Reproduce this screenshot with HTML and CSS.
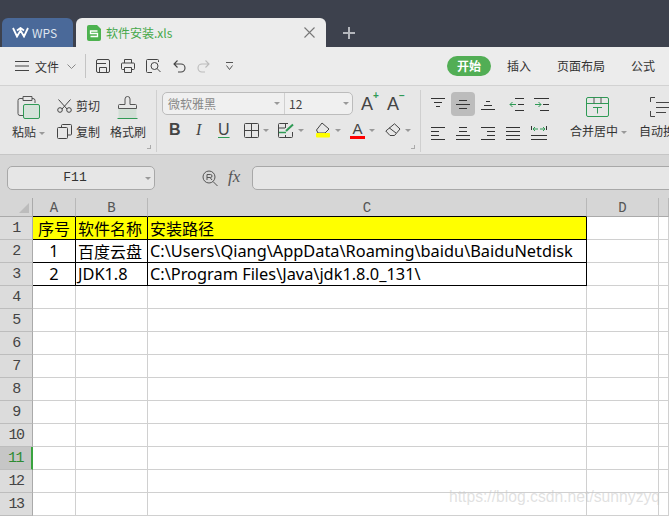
FILE: index.html
```html
<!DOCTYPE html>
<html lang="zh-CN">
<head>
    <meta charset="UTF-8">
    <meta name="viewport" content="width=device-width, initial-scale=1.0">
    <title>软件安装.xls</title>
    <link rel="stylesheet" href="styles.css">
</head>
<body>
    <div class="titlebar">
        <div class="tab-wps">
            <svg width="17" height="11" viewBox="0 0 17 11"><path d="M1 1 5 9.500 8.500 3.500 12 9.500 16 1M5 3.500 8.500 1 12 3.500" fill="none" stroke="#fff" stroke-width="1.800"/></svg>
            <span>WPS</span>
        </div>
        <div class="tab-file">
            <svg width="14" height="16" viewBox="0 0 14 16"><path d="M2 0H10L14 4V14A2 2 0 0 1 12 16H2A2 2 0 0 1 0 14V2A2 2 0 0 1 2 0Z" fill="#4db24f"/><path d="M10.500 6H3.500V8.500H10.500V11.500H3.500" fill="none" stroke="#fff" stroke-width="1.300"/></svg>
            <span class="tab-file-name">软件安装.xls</span>
            <svg class="tab-close" width="11" height="11" viewBox="0 0 11 11"><path d="M.5.5 10.500 10.500M10.500.5.5 10.500" stroke="#777" stroke-width="1.100"/></svg>
        </div>
        <svg class="tab-add" width="12" height="12" viewBox="0 0 12 12"><path d="M6 0V12M0 6H12" stroke="#b4b6bc" stroke-width="2"/></svg>
    </div>

    <div class="menubar">
        <svg class="menu-icon" width="14" height="10" viewBox="0 0 14 10"><path d="M0 .5H14M0 5H14M0 9.500H14" stroke="#444"/></svg>
        <span class="menu-file">文件</span>
        <svg class="menu-chevron" width="9" height="5" viewBox="0 0 9 5"><path d="M.5.5 4.500 4.500 8.500.5" fill="none" stroke="#888"/></svg>
        <div class="menu-divider"></div>
        <div class="quick">
            <svg width="14" height="14" viewBox="0 0 14 14"><path d="M2 .5H12A1.500 1.500 0 0 1 13.500 2V12A1.500 1.500 0 0 1 12 13.500H2A1.500 1.500 0 0 1 .5 12V2A1.500 1.500 0 0 1 2 .5ZM3.500 13.500V8.500H10.500V13.500M.5 4.500H10" fill="none" stroke="#444"/></svg>
            <svg width="14" height="14" viewBox="0 0 14 14"><path d="M3.500 4V.5H10.500V4M3.500 10.500H1.500A1 1 0 0 1 .5 9.500V5A1 1 0 0 1 1.500 4H12.500A1 1 0 0 1 13.500 5V9.500A1 1 0 0 1 12.500 10.500H10.500M3.500 8.500H10.500V13.500H3.500Z" fill="none" stroke="#444"/></svg>
            <svg width="15" height="14" viewBox="0 0 15 14"><path d="M12.500 3V1.500A1 1 0 0 0 11.500.5H1.500A1 1 0 0 0 .5 1.500V12.500A1 1 0 0 0 1.500 13.500H6" fill="none" stroke="#444"/><circle cx="8.500" cy="7" r="3.500" fill="none" stroke="#444"/><path d="M11 9.500 14.500 13" stroke="#444"/></svg>
        </div>
        <div class="history">
            <svg width="13" height="13" viewBox="0 0 13 13"><path d="M4.500 .5 1 4 4.500 7.500M1 4H8A4 4 0 0 1 8 12H5" fill="none" stroke="#444" stroke-width="1.100"/></svg>
            <svg width="13" height="13" viewBox="0 0 13 13"><path d="M8.500 .5 12 4 8.500 7.500M12 4H5A4 4 0 0 0 5 12H8" fill="none" stroke="#bbb" stroke-width="1.100"/></svg>
            <svg class="quick-more" width="7" height="9" viewBox="0 0 7 9"><path d="M0 .5H7M.5 3.500 3.500 7.500 6.500 3.500" fill="none" stroke="#555"/></svg>
        </div>
        <div class="menu-tabs">
            <span class="menu-tab menu-tab-active">开始</span>
            <span class="menu-tab">插入</span>
            <span class="menu-tab">页面布局</span>
            <span class="menu-tab">公式</span>
        </div>
    </div>

    <div class="ribbon">
        <div class="group group-clipboard">
            <div class="big-btn btn-paste">
                <svg width="23" height="23" viewBox="0 0 23 23"><path d="M6 2.500H3A2 2 0 0 0 1 4.500V17.500A2 2 0 0 0 3 19.500H6M15 2.500H16A2 2 0 0 1 18 4.500V7M6 .5H15V4.500H6Z" fill="none" stroke="#555"/><rect x="6.500" y="8.500" width="16" height="14" rx="1.500" fill="#d5e3da" stroke="#2f9a55"/></svg>
                <span class="big-label">粘贴<i class="caret"></i></span>
            </div>
            <div class="small-btns">
                <div class="small-btn">
                    <svg width="15" height="14" viewBox="0 0 15 14"><path d="M1.500 .5 10 10M13.500 .5 5 10" stroke="#444" fill="none"/><circle cx="3" cy="11" r="2.300" fill="none" stroke="#444"/><circle cx="12" cy="11" r="2.300" fill="none" stroke="#444"/></svg>
                    <span>剪切</span>
                </div>
                <div class="small-btn">
                    <svg width="15" height="15" viewBox="0 0 15 15"><path d="M4.500 3V1.500A1 1 0 0 1 5.500.5H13.500A1 1 0 0 1 14.500 1.500V10A1 1 0 0 1 13.500 11H11" fill="none" stroke="#444"/><rect x=".5" y="3.500" width="10" height="11" rx="1" fill="#e7e7e7" stroke="#444"/></svg>
                    <span>复制</span>
                </div>
            </div>
            <div class="big-btn btn-brush">
                <svg width="21" height="23" viewBox="0 0 21 23"><path d="M1.500 12H19.500V22H1.500Z" fill="#d2dfd6"/><path d="M1.500 12.500V9.500A1 1 0 0 1 2.500 8.500H8V3A2.500 2.500 0 0 1 13 3V8.500H18.500A1 1 0 0 1 19.500 9.500V12.500Z" fill="none" stroke="#555"/><path d="M.5 22.500H20.500" stroke="#2f9a55"/></svg>
                <span class="big-label">格式刷</span>
            </div>
            <i class="launcher"></i>
        </div>

        <div class="group group-font">
            <div class="font-row">
                <div class="font-box">
                    <div class="font-name">微软雅黑<i class="caret"></i></div>
                    <div class="font-size">12<i class="caret"></i></div>
                </div>
                <span class="grow-btn">A<b class="grow-plus">+</b></span>
                <span class="grow-btn">A<b class="grow-minus">−</b></span>
            </div>
            <div class="format-row">
                <span class="fmt fmt-bold">B</span>
                <span class="fmt fmt-italic">I</span>
                <span class="fmt fmt-under">U</span>
                <span class="fmt-drop">
                    <svg width="15" height="15" viewBox="0 0 15 15"><path d="M1.500.5H13.500A1 1 0 0 1 14.500 1.500V13.500A1 1 0 0 1 13.500 14.500H1.500A1 1 0 0 1 .5 13.500V1.500A1 1 0 0 1 1.500.5ZM7.500.5V14.500M.5 7.500H14.500" fill="none" stroke="#444"/></svg>
                    <i class="caret"></i>
                </span>
                <span class="fmt-drop fmt-drop-wide">
                    <svg width="16" height="15" viewBox="0 0 16 15"><path d="M10 .5H1.500A1 1 0 0 0 .5 1.500V13.500A1 1 0 0 0 1.500 14.500H13.500A1 1 0 0 0 14.500 13.500V9M7.500.5V5M.5 5H7M7.500 12V14.500" fill="none" stroke="#444"/><path d="M1 9.500H8" stroke="#2f9a55" stroke-width="1.500"/><path d="M8 8 15 1.500" stroke="#2f9a55" stroke-width="2"/></svg>
                    <i class="caret"></i>
                </span>
                <span class="fmt-drop">
                    <svg width="16" height="16" viewBox="0 0 16 16"><path d="M7 1 14 7 10 11H3L1.500 8Z" fill="none" stroke="#444"/><rect x="1" y="11" width="14" height="4.500" rx="1" fill="#ff0"/></svg>
                    <i class="caret"></i>
                </span>
                <span class="fmt-drop">
                    <span class="fmt-color">A</span>
                    <i class="caret"></i>
                </span>
                <span class="fmt-drop">
                    <svg width="16" height="14" viewBox="0 0 16 14"><path d="M9.500.8 15 6 9.500 12.500H5L.8 8Z M4 4.700 11 10" fill="none" stroke="#444"/></svg>
                    <i class="caret"></i>
                </span>
            </div>
            <i class="launcher"></i>
        </div>

        <div class="group-align">
            <div class="align-row">
                <span class="align-btn"><svg width="14" height="12" viewBox="0 0 14 12"><path d="M0 .5H14M3 4.500H11M5 8.500H9" stroke="#333"/></svg></span>
                <span class="align-btn align-on"><svg width="14" height="9" viewBox="0 0 14 9"><path d="M3 .5H11M0 4.500H14M3 8.500H11" stroke="#333"/></svg></span>
                <span class="align-btn"><svg width="14" height="12" viewBox="0 0 14 12"><path d="M5 3.500H9M3 7.500H11M0 11.500H14" stroke="#333"/></svg></span>
                <span class="align-btn align-indent"><svg width="15" height="13" viewBox="0 0 15 13"><path d="M6 .5H15M9 6.500H15M6 12.500H15" stroke="#333"/><path d="M7 6.500H1M3.500 4 1 6.500 3.500 9" fill="none" stroke="#2f9a55"/></svg></span>
                <span class="align-btn align-indent"><svg width="15" height="13" viewBox="0 0 15 13"><path d="M0 .5H15M9 6.500H15M6 12.500H15" stroke="#333"/><path d="M1 6.500H7M4.500 4 7 6.500 4.500 9" fill="none" stroke="#2f9a55"/></svg></span>
            </div>
            <div class="align-row">
                <span class="align-btn"><svg width="14" height="13" viewBox="0 0 14 13"><path d="M0 .5H14M0 4.500H8M0 8.500H8M0 12.500H14" stroke="#333"/></svg></span>
                <span class="align-btn"><svg width="14" height="13" viewBox="0 0 14 13"><path d="M0 12.500H14M3 .5H11M3 4.500H11M0 8.500H14" stroke="#333"/></svg></span>
                <span class="align-btn"><svg width="14" height="13" viewBox="0 0 14 13"><path d="M0 .5H14M6 4.500H14M6 8.500H14M0 12.500H14" stroke="#333"/></svg></span>
                <span class="align-btn"><svg width="14" height="13" viewBox="0 0 14 13"><path d="M0 .5H14M0 4.500H14M0 8.500H14M0 12.500H14" stroke="#333"/></svg></span>
                <span class="align-btn"><svg width="16" height="14" viewBox="0 0 16 14"><path d="M.5 0V4M15.500 0V4M0 9.500H16M0 13.500H16" stroke="#333"/><path d="M2 3H7M4 1 2 3 4 5M14 3H9M12 1 14 3 12 5" fill="none" stroke="#2f9a55"/></svg></span>
            </div>
        </div>

        <div class="big-btn btn-merge">
            <svg width="23" height="20" viewBox="0 0 23 20"><path d="M2 .5H21A1.500 1.500 0 0 1 22.500 2V18A1.500 1.500 0 0 1 21 19.500H2A1.500 1.500 0 0 1 .5 18V2A1.500 1.500 0 0 1 2 .5ZM.5 6.500H22.500" fill="none" stroke="#2f9a55"/><path d="M8 .5V6.500M15 .5V6.500" stroke="#555"/><path d="M7 10.500H16M11.500 10.500V16.500" stroke="#2f9a55"/></svg>
            <span class="big-label">合并居中<i class="caret"></i></span>
        </div>
        <div class="big-btn btn-wrap">
            <svg width="30" height="20" viewBox="0 0 30 20"><path d="M5 .5H.5V5M.5 14V19.500H5M6 5.500H30M6 10.500H30M6 15.500H16" fill="none" stroke="#444"/></svg>
            <span class="big-label">自动换行</span>
        </div>
    </div>

    <div class="formula">
        <div class="name-box">F11<i class="caret"></i></div>
        <svg class="formula-zoom" width="16" height="17" viewBox="0 0 16 17"><circle cx="7" cy="7" r="6" fill="none" stroke="#555"/><path d="M5 10V4.500H8.500A1.500 1.500 0 0 1 8.500 7.500H5M8 7.500 10 10M11 11.500 15.500 16" fill="none" stroke="#555"/></svg>
        <span class="formula-fx">fx</span>
        <div class="formula-input"></div>
    </div>

    <div class="sheet">
        <div class="corner"><i class="corner-mark"></i></div>
        <div class="col-head edge">A</div>
        <div class="col-head edge">B</div>
        <div class="col-head edge">C</div>
        <div class="col-head">D</div>
        <div class="col-head"></div>

        <div class="row-head">1</div>
        <div class="cell boxed fill cell-center">序号</div>
        <div class="cell boxed fill">软件名称</div>
        <div class="cell boxed fill">安装路径</div>
        <div class="cell"></div><div class="cell"></div>

        <div class="row-head">2</div>
        <div class="cell boxed cell-center latin">1</div>
        <div class="cell boxed">百度云盘</div>
        <div class="cell boxed latin">C:\Users\Qiang\AppData\Roaming\baidu\BaiduNetdisk</div>
        <div class="cell"></div><div class="cell"></div>

        <div class="row-head">3</div>
        <div class="cell boxed cell-center latin">2</div>
        <div class="cell boxed latin">JDK1.8</div>
        <div class="cell boxed latin">C:\Program Files\Java\jdk1.8.0_131\</div>
        <div class="cell"></div><div class="cell"></div>

        <div class="row-head">4</div><div class="cell"></div><div class="cell"></div><div class="cell"></div><div class="cell"></div><div class="cell"></div>
        <div class="row-head">5</div><div class="cell"></div><div class="cell"></div><div class="cell"></div><div class="cell"></div><div class="cell"></div>
        <div class="row-head">6</div><div class="cell"></div><div class="cell"></div><div class="cell"></div><div class="cell"></div><div class="cell"></div>
        <div class="row-head">7</div><div class="cell"></div><div class="cell"></div><div class="cell"></div><div class="cell"></div><div class="cell"></div>
        <div class="row-head">8</div><div class="cell"></div><div class="cell"></div><div class="cell"></div><div class="cell"></div><div class="cell"></div>
        <div class="row-head">9</div><div class="cell"></div><div class="cell"></div><div class="cell"></div><div class="cell"></div><div class="cell"></div>
        <div class="row-head">10</div><div class="cell"></div><div class="cell"></div><div class="cell"></div><div class="cell"></div><div class="cell"></div>
        <div class="row-head row-head-active">11</div><div class="cell"></div><div class="cell"></div><div class="cell"></div><div class="cell"></div><div class="cell"></div>
        <div class="row-head">12</div><div class="cell"></div><div class="cell"></div><div class="cell"></div><div class="cell"></div><div class="cell"></div>
        <div class="row-head">13</div><div class="cell"></div><div class="cell"></div><div class="cell"></div><div class="cell"></div><div class="cell"></div>
    </div>

    <div class="watermark">https://blog.csdn.net/sunnyzyq</div>
</body>
</html>
```

FILE: styles.css
```css
* {
    box-sizing: border-box;
}
html, body {
    height: 516px;
}
body {
    margin: 0;
    position: relative;
    overflow: hidden;
    background-color: #fff;
    color: #333;
    font-family: "Noto Sans CJK SC", "Noto Sans", sans-serif;
    font-size: 12px;
}
svg {
    display: block;
    flex: none;
}
i {
    font-style: normal;
}

/* caret de los desplegables */
.caret {
    display: inline-block;
    width: 0;
    height: 0;
    border-left: 3px solid transparent;
    border-right: 3px solid transparent;
    border-top: 3px solid #999;
}

/* barra de titulo */
.titlebar {
    height: 47px;
    background-color: #3d414d;
    display: flex;
    align-items: flex-end;
    padding-left: 2px;
}
.tab-wps {
    width: 71px;
    height: 29px;
    background-color: #4a6999;
    border-radius: 6px 6px 0 0;
    color: #dfe5ee;
    display: flex;
    align-items: center;
    gap: 3px;
    padding-left: 10px;
}
.tab-file {
    width: 250px;
    height: 29px;
    margin-left: 3px;
    background-color: #ececec;
    border-radius: 6px 6px 0 0;
    display: flex;
    align-items: center;
    padding: 0 11px;
}
.tab-file-name {
    margin-left: 5px;
    color: #45a84a;
}
.tab-close {
    margin-left: auto;
}
.tab-add {
    margin: 0 0 8px 17px;
}

/* menu */
.menubar {
    height: 39px;
    background-color: #ececec;
    border-bottom: 1px solid #d2d2d2;
    display: flex;
    align-items: center;
    padding-left: 15px;
}
.menu-file {
    margin-left: 6px;
    white-space: nowrap;
    flex: none;
}
.menu-chevron {
    margin-left: 8px;
}
.menu-divider {
    width: 1px;
    height: 24px;
    margin-left: 9px;
    background-color: #c4c4c4;
    flex: none;
}
.quick {
    display: flex;
    gap: 11px;
    margin-left: 10px;
    flex: none;
}
.history {
    display: flex;
    align-items: center;
    gap: 11px;
    margin-left: 12px;
    flex: none;
}
.quick-more {
    margin-left: 5px;
}
.menu-tabs {
    display: flex;
    align-items: center;
    margin-left: 214px;
    flex: none;
}
.menu-tab {
    padding: 0 13px;
    line-height: 20px;
    white-space: nowrap;
}
.menu-tab-active {
    padding: 0 10px;
    margin-right: 3px;
    border-radius: 10px;
    background-color: #52ae55;
    color: #fff;
    font-weight: bold;
}

/* cinta */
.ribbon {
    height: 68px;
    background-color: #e7e7e7;
    display: flex;
    overflow: hidden;
}
.group {
    position: relative;
    height: 62px;
    margin-top: 4px;
    border-right: 1px solid #cfcfcf;
    flex: none;
}
.launcher {
    position: absolute;
    right: 5px;
    bottom: 3px;
    width: 4px;
    height: 4px;
    border-right: 1px solid #aaa;
    border-bottom: 1px solid #aaa;
}
.group-clipboard {
    width: 157px;
    display: flex;
    padding-left: 12px;
}
.big-btn {
    display: flex;
    flex-direction: column;
    flex: none;
}
.big-label {
    white-space: nowrap;
    line-height: 18px;
    display: block;
}
.big-label .caret {
    margin-left: 3px;
    vertical-align: 2px;
}
.btn-paste {
    width: 44px;
    padding-top: 6px;
    gap: 4px;
}
.btn-paste svg {
    margin-left: 5px;
}
.small-btns {
    width: 54px;
    padding: 7px 0 0 1px;
    display: flex;
    flex-direction: column;
    gap: 9px;
}
.small-btn {
    display: flex;
    align-items: center;
    gap: 4px;
    height: 17px;
}
.btn-brush {
    width: 36px;
    padding-top: 6px;
    gap: 4px;
}
.btn-brush svg {
    margin-left: 7px;
}

.group-font {
    width: 264px;
    padding: 2px 0 0 5px;
}
.font-row {
    display: flex;
    align-items: center;
}
.font-box {
    width: 191px;
    height: 23px;
    display: flex;
    background-color: #f0f0f0;
    border: 1px solid #bcbcbc;
    border-radius: 5px;
    flex: none;
}
.font-name {
    width: 122px;
    padding: 0 4px 0 5px;
    border-right: 1px solid #d0d0d0;
    color: #888;
    display: flex;
    align-items: center;
    justify-content: space-between;
}
.font-size {
    flex: 1;
    padding: 0 3px 0 4px;
    color: #444;
    display: flex;
    align-items: center;
    justify-content: space-between;
}
.grow-btn {
    position: relative;
    width: 26px;
    font-family: "Liberation Sans", sans-serif;
    font-size: 18px;
    line-height: 22px;
    color: #444;
}
.grow-btn:first-of-type {
    margin-left: 8px;
}
.grow-plus,
.grow-minus {
    position: absolute;
    top: -3px;
    left: 12px;
    font-size: 10px;
    line-height: 12px;
    color: #2f9a55;
}
.format-row {
    display: flex;
    align-items: center;
    margin-top: 5px;
    height: 20px;
    padding-left: 6px;
}
.fmt {
    width: 25px;
    font-family: "Liberation Sans", sans-serif;
    font-size: 16px;
    line-height: 18px;
    color: #444;
    padding-left: 1px;
}
.fmt-bold {
    font-weight: bold;
}
.fmt-italic {
    font-family: "Liberation Serif", serif;
    font-style: italic;
    padding-left: 3px;
}
.fmt-under {
    width: 26px;
    text-decoration: underline;
    text-decoration-color: #2f9a55;
    text-underline-offset: 2px;
    padding-left: 0;
}
.fmt-drop {
    width: 35px;
    display: flex;
    align-items: center;
    gap: 4px;
    flex: none;
}
.fmt-drop:nth-child(4) {
    width: 34px;
}
.fmt-drop-wide {
    width: 37px;
}
.fmt-drop .caret {
    margin-top: 1px;
}
.fmt-color {
    width: 15px;
    font-family: "Liberation Sans", sans-serif;
    font-size: 15px;
    line-height: 14px;
    text-align: center;
    border-bottom: 3px solid #f00;
    color: #444;
}

.group-align {
    width: 149px;
    padding: 6px 0 0 10px;
    flex: none;
}
.align-row {
    display: flex;
    align-items: center;
    height: 24px;
    margin-bottom: 5px;
}
.align-btn {
    width: 25px;
    height: 24px;
    display: flex;
    align-items: center;
    flex: none;
}
.align-on {
    position: relative;
    padding-left: 5px;
    margin-left: -5px;
    width: 24px;
    margin-right: 6px;
    background-color: #bcbcbc;
    border-radius: 4px;
}
.align-indent:nth-child(4) {
    margin-left: 3px;
}
.btn-merge {
    width: 69px;
    padding-top: 11px;
    align-items: flex-start;
    gap: 5px;
}
.btn-merge svg {
    margin-left: 16px;
}
.btn-wrap {
    padding-top: 11px;
    gap: 5px;
}
.btn-wrap svg {
    margin-left: 11px;
}

/* barra de formulas */
.formula {
    height: 44px;
    background-color: #d6d6d6;
    border-top: 1px solid #c6c6c6;
    display: flex;
    align-items: flex-start;
    padding: 11px 0 0 7px;
}
.name-box {
    position: relative;
    width: 148px;
    height: 24px;
    background-color: #e6e6e6;
    border: 1px solid #a8a8a8;
    border-radius: 5px;
    font-family: "Liberation Mono", monospace;
    font-size: 13px;
    line-height: 22px;
    text-align: center;
    padding-right: 12px;
    flex: none;
}
.name-box .caret {
    position: absolute;
    right: 3px;
    top: 10px;
}
.formula-zoom {
    margin: 4px 0 0 47px;
}
.formula-fx {
    width: 16px;
    margin: 0 0 0 10px;
    font-family: "Liberation Serif", serif;
    font-style: italic;
    font-size: 17px;
    line-height: 22px;
    color: #555;
    flex: none;
}
.formula-input {
    width: 430px;
    height: 24px;
    margin-left: 8px;
    background-color: #e6e6e6;
    border: 1px solid #a8a8a8;
    border-radius: 5px 0 0 5px;
    flex: none;
}

/* hoja */
.sheet {
    display: grid;
    grid-template-columns: 33px 43px 72px 439px 72px 10px;
    grid-template-rows: 19px;
    grid-auto-rows: 23px;
}
.corner,
.col-head {
    position: relative;
    background-color: #d6d6d6;
    border-bottom: 1px solid #aaa;
}
.corner {
    border-right: 1px solid #aaa;
}
.corner-mark {
    position: absolute;
    right: 3px;
    bottom: 3px;
    width: 0;
    height: 0;
    border-left: 10px solid transparent;
    border-bottom: 10px solid #bcbcbc;
}
.col-head {
    border-right: 1px solid #b8b8b8;
    font-family: "Liberation Mono", monospace;
    font-size: 14px;
    line-height: 20px;
    text-align: center;
    color: #555;
}
.col-head.edge {
    border-bottom-color: #000;
}
.row-head {
    background-color: #dcdcdc;
    border-right: 1px solid #aaa;
    border-bottom: 1px solid #bdbdbd;
    font-family: "Liberation Mono", monospace;
    font-size: 15px;
    letter-spacing: -1.500px;
    line-height: 24px;
    text-align: center;
    color: #444;
}
.row-head-active {
    background-color: #c6c6c6;
    border-right: 2px solid #3aa33f;
    color: #2e8b33;
}
.cell {
    border-right: 1px solid #d0d0d0;
    border-bottom: 1px solid #d0d0d0;
    padding-left: 2px;
    font-size: 16px;
    line-height: 22px;
    color: #000;
    white-space: nowrap;
    overflow: hidden;
}
.latin {
    font-family: "Noto Sans", "Noto Sans CJK SC", sans-serif;
    font-size: 16.350px;
}
.boxed {
    border-color: #000;
}
.fill {
    background-color: #ff0;
}
.cell-center {
    padding-left: 0;
    text-align: center;
}

.watermark {
    position: absolute;
    left: 449px;
    top: 488px;
    font-family: "Liberation Sans", sans-serif;
    font-size: 15.700px;
    line-height: 18px;
    color: rgba(200, 200, 200, 0.55);
    white-space: nowrap;
}
```
